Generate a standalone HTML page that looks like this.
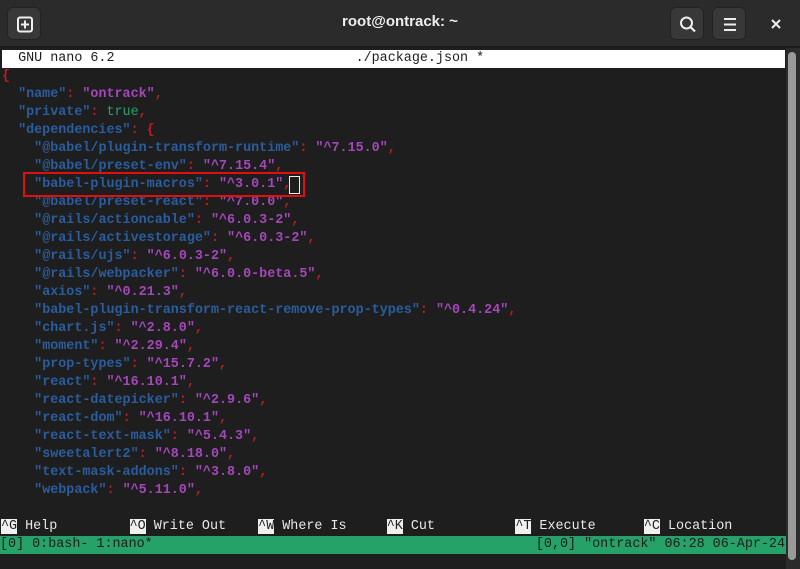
<!DOCTYPE html>
<html><head><meta charset="utf-8"><style>
*{margin:0;padding:0;box-sizing:border-box}
body{width:800px;height:569px;background:#1e1e1e;overflow:hidden;position:relative;font-family:"Liberation Sans",sans-serif}
.hdr{position:absolute;left:0;top:0;width:800px;height:47px;background:#2b2b2b;border-bottom:1px solid #1a1a1a}
.btn{position:absolute;top:7px;width:34px;height:33px;background:#383838;border-radius:6px;border:1px solid #222}
.title{position:absolute;top:13px;left:0;width:800px;text-align:center;color:#eee;font-weight:bold;font-size:15px}
.term{position:absolute;left:0;top:50px;width:786px;height:519px;font-family:"Liberation Mono",monospace;font-size:13.4px;line-height:18px;white-space:pre}
.row{position:absolute;left:2px;height:18px}
.k{color:#2a5d9f;font-weight:bold}.s{color:#a347ba;font-weight:bold}.p{color:#c01c28;font-weight:bold}.g{color:#26a269}
.sb{position:absolute;left:786px;top:48px;width:14px;height:521px;background:#2b2b2b}
.thumb{position:absolute;left:2px;top:4px;width:8px;height:508px;background:#9a9a9a;border-radius:4px}
.inv{background:#f0f0f0;color:#1e1e1e}
.w{color:#e8e8e8}
</style></head><body>
<div class="hdr">
 <div class="btn" style="left:7px"><svg width="34" height="33" viewBox="0 0 34 33"><rect x="10" y="9.5" width="14" height="14" rx="2" fill="none" stroke="#eee" stroke-width="2"/><path d="M17 12.5v8M13 16.5h8" stroke="#eee" stroke-width="2"/></svg></div>
 <div class="title">root@ontrack: ~</div>
 <div class="btn" style="left:670px"><svg width="34" height="33" viewBox="0 0 34 33"><circle cx="15.5" cy="15" r="5.5" fill="none" stroke="#eee" stroke-width="2"/><path d="M19.5 19l4.5 4.5" stroke="#eee" stroke-width="2.2"/></svg></div>
 <div class="btn" style="left:712px"><svg width="34" height="33" viewBox="0 0 34 33"><path d="M11 11h12M11 16.5h12M11 22h12" stroke="#eee" stroke-width="2"/></svg></div>
 <svg style="position:absolute;left:770px;top:18px" width="12" height="12" viewBox="0 0 12 12"><path d="M2 2l8 8M10 2l-8 8" stroke="#eee" stroke-width="2"/></svg>
</div>
<div class="term">
<div class="row" style="top:0px;left:2px;width:783px;height:18px;background:#fff;color:#1e1e1e">  GNU nano 6.2                              ./package.json *</div>
<div class="row" style="top:18px"><span class="p">{</span></div>
<div class="row" style="top:36px">  <span class="k">"name"</span><span class="p">: </span><span class="s">"ontrack"</span><span class="p">,</span></div>
<div class="row" style="top:54px">  <span class="k">"private"</span><span class="p">: </span><span class="g">true</span><span class="p">,</span></div>
<div class="row" style="top:72px">  <span class="k">"dependencies"</span><span class="p">: {</span></div>
<div class="row" style="top:90px">    <span class="k">"@babel/plugin-transform-runtime"</span><span class="p">: </span><span class="s">"^7.15.0"</span><span class="p">,</span></div>
<div class="row" style="top:108px">    <span class="k">"@babel/preset-env"</span><span class="p">: </span><span class="s">"^7.15.4"</span><span class="p">,</span></div>
<div class="row" style="top:126px">    <span class="k">"babel-plugin-macros"</span><span class="p">: </span><span class="s">"^3.0.1"</span><span class="p">,</span></div>
<div class="row" style="top:144px">    <span class="k">"@babel/preset-react"</span><span class="p">: </span><span class="s">"^7.0.0"</span><span class="p">,</span></div>
<div class="row" style="top:162px">    <span class="k">"@rails/actioncable"</span><span class="p">: </span><span class="s">"^6.0.3-2"</span><span class="p">,</span></div>
<div class="row" style="top:180px">    <span class="k">"@rails/activestorage"</span><span class="p">: </span><span class="s">"^6.0.3-2"</span><span class="p">,</span></div>
<div class="row" style="top:198px">    <span class="k">"@rails/ujs"</span><span class="p">: </span><span class="s">"^6.0.3-2"</span><span class="p">,</span></div>
<div class="row" style="top:216px">    <span class="k">"@rails/webpacker"</span><span class="p">: </span><span class="s">"^6.0.0-beta.5"</span><span class="p">,</span></div>
<div class="row" style="top:234px">    <span class="k">"axios"</span><span class="p">: </span><span class="s">"^0.21.3"</span><span class="p">,</span></div>
<div class="row" style="top:252px">    <span class="k">"babel-plugin-transform-react-remove-prop-types"</span><span class="p">: </span><span class="s">"^0.4.24"</span><span class="p">,</span></div>
<div class="row" style="top:270px">    <span class="k">"chart.js"</span><span class="p">: </span><span class="s">"^2.8.0"</span><span class="p">,</span></div>
<div class="row" style="top:288px">    <span class="k">"moment"</span><span class="p">: </span><span class="s">"^2.29.4"</span><span class="p">,</span></div>
<div class="row" style="top:306px">    <span class="k">"prop-types"</span><span class="p">: </span><span class="s">"^15.7.2"</span><span class="p">,</span></div>
<div class="row" style="top:324px">    <span class="k">"react"</span><span class="p">: </span><span class="s">"^16.10.1"</span><span class="p">,</span></div>
<div class="row" style="top:342px">    <span class="k">"react-datepicker"</span><span class="p">: </span><span class="s">"^2.9.6"</span><span class="p">,</span></div>
<div class="row" style="top:360px">    <span class="k">"react-dom"</span><span class="p">: </span><span class="s">"^16.10.1"</span><span class="p">,</span></div>
<div class="row" style="top:378px">    <span class="k">"react-text-mask"</span><span class="p">: </span><span class="s">"^5.4.3"</span><span class="p">,</span></div>
<div class="row" style="top:396px">    <span class="k">"sweetalert2"</span><span class="p">: </span><span class="s">"^8.18.0"</span><span class="p">,</span></div>
<div class="row" style="top:414px">    <span class="k">"text-mask-addons"</span><span class="p">: </span><span class="s">"^3.8.0"</span><span class="p">,</span></div>
<div class="row" style="top:432px">    <span class="k">"webpack"</span><span class="p">: </span><span class="s">"^5.11.0"</span><span class="p">,</span></div>
<div class="row w" style="top:468px;left:1px"><span class="inv">^G</span> Help         <span class="inv">^O</span> Write Out    <span class="inv">^W</span> Where Is     <span class="inv">^K</span> Cut          <span class="inv">^T</span> Execute      <span class="inv">^C</span> Location</div>
<div class="row" style="top:486px;left:0;width:786px;background:#26a269;color:#1e1e1e">[0] 0:bash- 1:nano*<span style="position:absolute;right:1px;top:0">[0,0] "ontrack" 06:28 06-Apr-24</span></div>
<div style="position:absolute;left:289px;top:126px;width:11px;height:18px;border:1px solid #eee"></div>
<div style="position:absolute;left:23px;top:122px;width:282px;height:25px;border:2.5px solid #e01010"></div>
</div>
<div class="sb"><div class="thumb"></div></div>
</body></html>
